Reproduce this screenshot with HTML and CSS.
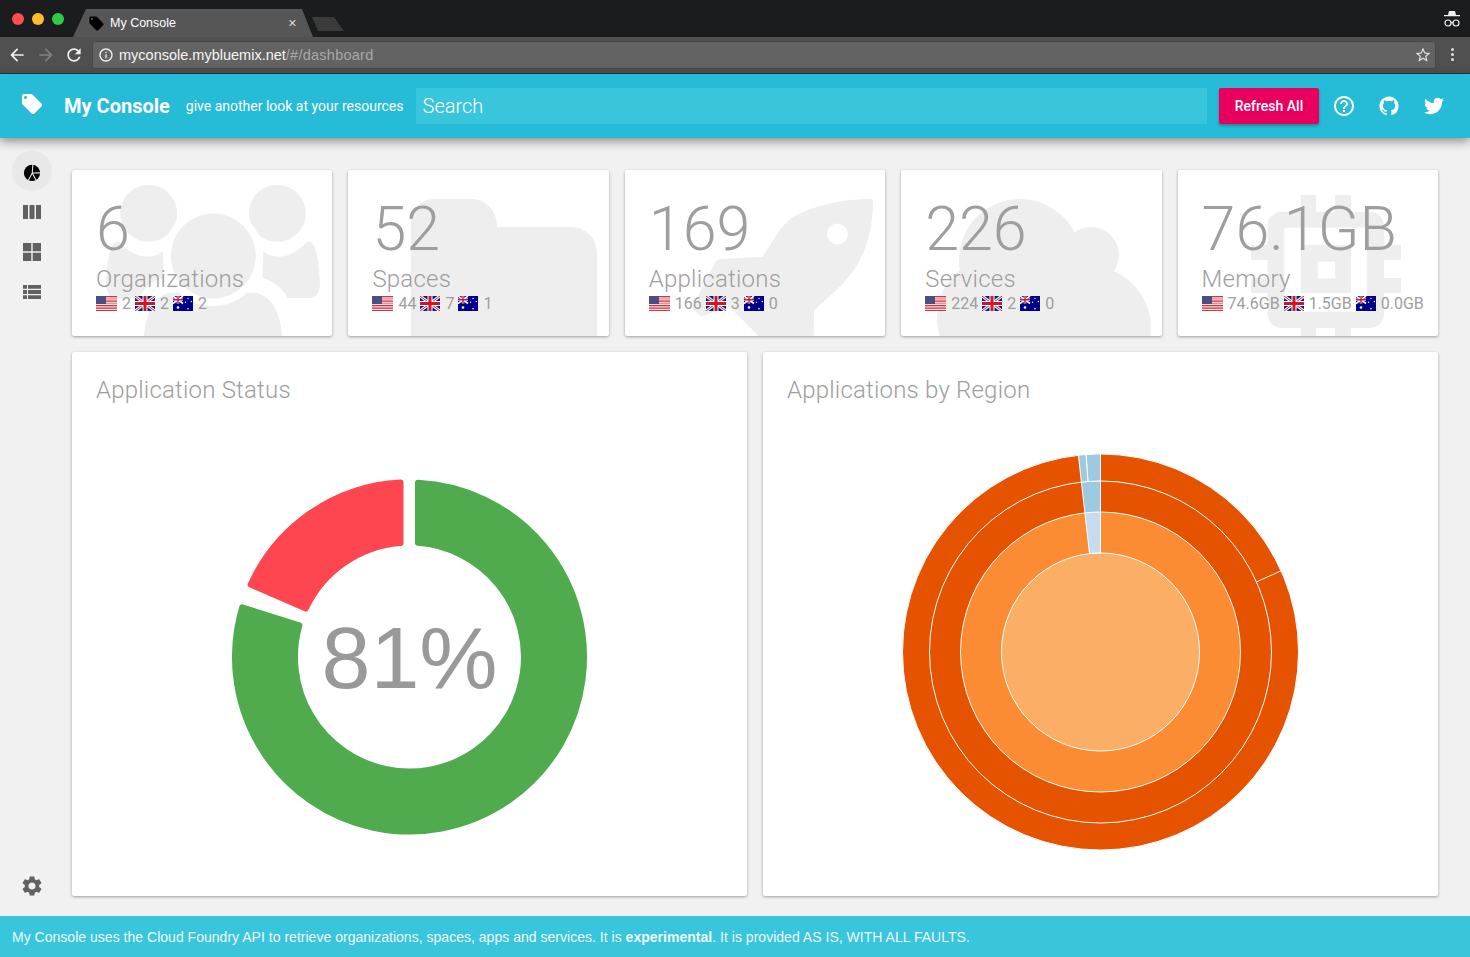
FILE: index.html
```html
<!DOCTYPE html>
<html lang="en">
<head>
  <meta charset="UTF-8">
  <meta name="viewport" content="width=device-width, initial-scale=1.0">
  <title>My Console</title>
  <link rel="stylesheet" href="styles.css">
</head>
<body>
  <svg class="defs" width="0" height="0">
    <symbol id="flag-us" viewBox="0 0 21 15">
      <rect width="21" height="15" fill="#f3dfe0"/>
      <path d="M0 0h21v1.2H0zM0 4.6h21v1.1H0zM0 9h21v1.2H0zM0 11.6h21v1.1H0zM0 13.9h21V15H0z" fill="#d0343f"/>
      <path d="M9 2.3h12v1.1H9zM9 6.8h12v1.1H9z" fill="#e28f95"/>
      <rect width="10" height="8" fill="#4a4f83"/>
    </symbol>
    <symbol id="flag-uk" viewBox="0 0 20 15">
      <rect width="20" height="15" fill="#00247d"/>
      <path d="M0 0l20 15M20 0L0 15" stroke="#fff" stroke-width="3"/>
      <path d="M0 0l20 15M20 0L0 15" stroke="#cf142b" stroke-width="1"/>
      <path d="M10 0v15M0 7.5h20" stroke="#fff" stroke-width="5"/>
      <path d="M10 0v15M0 7.5h20" stroke="#cf142b" stroke-width="3"/>
    </symbol>
    <symbol id="flag-au" viewBox="0 0 20 15">
      <rect width="20" height="15" fill="#00008b"/>
      <path d="M0 0l10 7.5M10 0L0 7.5" stroke="#fff" stroke-width="1.6"/>
      <path d="M5 0v7.5M0 3.75h10" stroke="#fff" stroke-width="2.6"/>
      <path d="M5 0v7.5M0 3.75h10" stroke="#cf142b" stroke-width="1.4"/>
      <g fill="#fff">
        <circle cx="5" cy="11.5" r="1.3"/>
        <circle cx="15" cy="2.5" r=".7"/>
        <circle cx="18.3" cy="5.5" r=".7"/>
        <circle cx="12.5" cy="6.3" r=".7"/>
        <circle cx="15" cy="12.8" r=".8"/>
      </g>
    </symbol>
    <symbol id="tag" viewBox="0 0 24 24">
      <path d="M21.41 11.58l-9-9C12.05 2.22 11.55 2 11 2H4c-1.1 0-2 .9-2 2v7c0 .55.22 1.05.59 1.42l9 9c.36.36.86.58 1.41.58.55 0 1.05-.22 1.41-.59l7-7c.37-.36.59-.86.59-1.41 0-.55-.23-1.06-.59-1.42zM5.5 7C4.67 7 4 6.33 4 5.5S4.67 4 5.5 4 7 4.67 7 5.5 6.33 7 5.5 7z"/>
    </symbol>
  </svg>

  <div class="browser">
    <div class="tabbar">
      <div class="lights">
        <span class="light red"></span>
        <span class="light yellow"></span>
        <span class="light green"></span>
      </div>
      <div class="tab">
        <svg class="tab-icon" viewBox="0 0 24 24"><use href="#tag"/></svg>
        <span class="tab-title">My Console</span>
        <span class="tab-close">&#10005;</span>
      </div>
      <div class="tab-new"></div>
      <svg class="incognito" viewBox="0 0 18 18">
        <path d="M6 1h6l1 4h4v1.3H1V5h4z" fill="#f0f0f0"/>
        <g fill="none" stroke="#f0f0f0" stroke-width="1.2">
          <circle cx="5" cy="13" r="3"/>
          <circle cx="13" cy="13" r="3"/>
          <path d="M8 12.6h2"/>
        </g>
      </svg>
    </div>
    <div class="toolbar">
      <svg class="nav-btn" viewBox="0 0 24 24"><path d="M20 11H7.83l5.59-5.59L12 4l-8 8 8 8 1.41-1.41L7.83 13H20v-2z"/></svg>
      <svg class="nav-btn off" viewBox="0 0 24 24"><path d="M12 4l-1.41 1.41L16.17 11H4v2h12.17l-5.58 5.59L12 20l8-8z"/></svg>
      <svg class="nav-btn" viewBox="0 0 24 24"><path d="M17.65 6.35C16.2 4.9 14.21 4 12 4c-4.42 0-7.99 3.58-7.99 8s3.57 8 7.99 8c3.73 0 6.84-2.55 7.73-6h-2.08c-.82 2.33-3.04 4-5.65 4-3.31 0-6-2.69-6-6s2.69-6 6-6c1.66 0 3.14.69 4.22 1.78L13 11h7V4l-2.35 2.35z"/></svg>
      <div class="address">
        <svg class="info" viewBox="0 0 24 24"><path d="M11 7h2v2h-2zm0 4h2v6h-2zm1-9C6.48 2 2 6.48 2 12s4.48 10 10 10 10-4.48 10-10S17.52 2 12 2zm0 18c-4.41 0-8-3.59-8-8s3.59-8 8-8 8 3.59 8 8-3.59 8-8 8z"/></svg>
        <span class="url">myconsole.mybluemix.net<span class="url-path">/#/dashboard</span></span>
        <svg class="star" viewBox="0 0 24 24"><path d="M22 9.24l-7.19-.62L12 2 9.19 8.63 2 9.24l5.46 4.73L5.82 21 12 17.27 18.18 21l-1.63-7.03L22 9.24zM12 15.4l-3.76 2.27 1-4.28-3.32-2.88 4.38-.38L12 6.1l1.71 4.04 4.38.38-3.32 2.88 1 4.28L12 15.4z"/></svg>
      </div>
      <div class="kebab"><span></span><span></span><span></span></div>
    </div>
  </div>

  <header class="app-header">
    <div class="logo"><svg viewBox="0 0 24 24"><use href="#tag"/></svg></div>
    <div class="app-title">My Console</div>
    <div class="tagline">give another look at your resources</div>
    <div class="search">Search</div>
    <button class="refresh">Refresh All</button>
    <svg class="head-icon" viewBox="0 0 24 24"><path d="M11 18h2v-2h-2v2zm1-16C6.48 2 2 6.48 2 12s4.48 10 10 10 10-4.48 10-10S17.52 2 12 2zm0 18c-4.41 0-8-3.59-8-8s3.59-8 8-8 8 3.59 8 8-3.59 8-8 8zm0-14c-2.21 0-4 1.79-4 4h2c0-1.1.9-2 2-2s2 .9 2 2c0 2-3 1.75-3 5h2c0-2.25 3-2.5 3-5 0-2.21-1.79-4-4-4z"/></svg>
    <svg class="head-icon" viewBox="-2 -2 20 20"><path d="M8 0C3.58 0 0 3.58 0 8c0 3.54 2.29 6.53 5.47 7.59.4.07.55-.17.55-.38 0-.19-.01-.82-.01-1.49-2.01.37-2.53-.49-2.69-.94-.09-.23-.48-.94-.82-1.13-.28-.15-.68-.52-.01-.53.63-.01 1.08.58 1.23.82.72 1.21 1.87.87 2.33.66.07-.52.28-.87.51-1.07-1.78-.2-3.64-.89-3.64-3.95 0-.87.31-1.59.82-2.15-.08-.2-.36-1.02.08-2.12 0 0 .67-.21 2.2.82.64-.18 1.32-.27 2-.27.68 0 1.36.09 2 .27 1.53-1.04 2.2-.82 2.2-.82.44 1.1.16 1.92.08 2.12.51.56.82 1.27.82 2.15 0 3.07-1.87 3.75-3.65 3.95.29.25.54.73.54 1.48 0 1.07-.01 1.93-.01 2.2 0 .21.15.46.55.38A8.013 8.013 0 0016 8c0-4.42-3.58-8-8-8z"/></svg>
    <svg class="head-icon" viewBox="-2.4 -2.4 28.8 28.8"><path d="M23.953 4.57a10 10 0 01-2.825.775 4.958 4.958 0 002.163-2.723c-.951.555-2.005.959-3.127 1.184a4.92 4.92 0 00-8.384 4.482C7.69 8.095 4.067 6.13 1.64 3.162a4.822 4.822 0 00-.666 2.475c0 1.71.87 3.213 2.188 4.096a4.904 4.904 0 01-2.228-.616v.06a4.923 4.923 0 003.946 4.827 4.996 4.996 0 01-2.212.085 4.936 4.936 0 004.604 3.417 9.867 9.867 0 01-6.102 2.105c-.39 0-.779-.023-1.17-.067a13.995 13.995 0 007.557 2.209c9.053 0 13.998-7.496 13.998-13.985 0-.21 0-.42-.015-.63A9.935 9.935 0 0024 4.59z"/></svg>
  </header>

  <div class="content">
    <nav class="sidebar">
      <div class="side-item active">
        <svg viewBox="0 0 20 20">
          <circle cx="10" cy="11" r="9"/>
          <path d="M10.3 11.2L11 1M10.3 11.2L20 11M10.3 11.2L5.5 20M10.3 11.2L15 20" stroke="#e8e8e8" stroke-width="1.2" fill="none"/>
        </svg>
      </div>
      <div class="side-item">
        <svg viewBox="0 0 18 14"><path d="M0 0h5v14H0zM6.5 0h5v14h-5zM13 0h5v14h-5z"/></svg>
      </div>
      <div class="side-item">
        <svg viewBox="0 0 18 18"><path d="M0 0h8.3v8.3H0zM9.7 0H18v8.3H9.7zM0 9.7h8.3V18H0zM9.7 9.7H18V18H9.7z"/></svg>
      </div>
      <div class="side-item">
        <svg viewBox="0 0 18 14"><path d="M0 0h4v3.8H0zM5 0h13v3.8H5zM0 5.1h4v3.8H0zM5 5.1h13v3.8H5zM0 10.2h4V14H0zM5 10.2h13V14H5z"/></svg>
      </div>
      <div class="side-item settings">
        <svg viewBox="2 2 20 20"><path d="M19.14 12.94c.04-.3.06-.61.06-.94 0-.32-.02-.64-.07-.94l2.03-1.58c.18-.14.23-.41.12-.61l-1.92-3.32c-.12-.22-.37-.29-.59-.22l-2.39.96c-.5-.38-1.03-.7-1.62-.94l-.36-2.54c-.04-.24-.24-.41-.48-.41h-3.84c-.24 0-.43.17-.47.41l-.36 2.54c-.59.24-1.13.57-1.62.94l-2.39-.96c-.22-.08-.47 0-.59.22L2.74 8.87c-.12.21-.08.47.12.61l2.03 1.58c-.05.3-.09.63-.09.94s.02.64.07.94l-2.03 1.58c-.18.14-.23.41-.12.61l1.92 3.32c.12.22.37.29.59.22l2.39-.96c.5.38 1.03.7 1.62.94l.36 2.54c.05.24.24.41.48.41h3.84c.24 0 .44-.17.47-.41l.36-2.54c.59-.24 1.13-.56 1.62-.94l2.39.96c.22.08.47 0 .59-.22l1.92-3.32c.12-.22.07-.47-.12-.61l-2.01-1.58zM12 15.6c-1.98 0-3.6-1.62-3.6-3.6s1.62-3.6 3.6-3.6 3.6 1.62 3.6 3.6-1.62 3.6-3.6 3.6z"/></svg>
      </div>
    </nav>

    <main class="dashboard">
      <section class="stats">
        <div class="card stat">
          <svg class="stat-bg" viewBox="0 0 260 166">
            <circle cx="76.7" cy="43.3" r="28.5"/>
            <circle cx="205.3" cy="43.3" r="28.5"/>
            <path d="M191 81C205 92 222 86 235 72C242 70 246 80 248 113C248 122 244 128 238 128H190z"/>
            <path d="M91 81C77 92 60 86 47 72C40 70 36 80 34 113C34 122 38 128 44 128H92z"/>
            <path class="halo" d="M64 190V170C64 140 78 116 98 115H185C205 118 218 140 218 170V190z"/>
            <circle class="cut" cx="141.3" cy="86" r="50"/>
            <circle cx="141.3" cy="86" r="42.5"/>
          </svg>
          <div class="stat-value">6</div>
          <div class="stat-label">Organizations</div>
          <div class="regions">
            <svg class="flag us"><use href="#flag-us"/></svg><span class="region-val">2</span>
            <svg class="flag"><use href="#flag-uk"/></svg><span class="region-val">2</span>
            <svg class="flag"><use href="#flag-au"/></svg><span class="region-val">2</span>
          </div>
        </div>

        <div class="card stat">
          <svg class="stat-bg" viewBox="0 0 260 166">
            <path d="M63 170V53C63 39 73 29 87 29H123C138 29 149 40 149 57H223C238 57 249 69 249 83V170z"/>
          </svg>
          <div class="stat-value">52</div>
          <div class="stat-label">Spaces</div>
          <div class="regions">
            <svg class="flag us"><use href="#flag-us"/></svg><span class="region-val">44</span>
            <svg class="flag"><use href="#flag-uk"/></svg><span class="region-val">7</span>
            <svg class="flag"><use href="#flag-au"/></svg><span class="region-val">1</span>
          </div>
        </div>

        <div class="card stat">
          <svg class="stat-bg" viewBox="0 0 260 166">
            <path d="M248 31C248 29 247 29 245 29C225 29 197 32 167.5 47C155 56 146 75 137.7 86.7L97 89C93 89 91 91 90 93L66.8 138.3L76.3 146.7L104.3 136.7L137.7 170H188.5L189.2 140C204 127 214 118 223.6 106.7C238 90 248 65 248 31z"/>
            <circle class="cut" cx="212.4" cy="64" r="10.5"/>
          </svg>
          <div class="stat-value">169</div>
          <div class="stat-label">Applications</div>
          <div class="regions">
            <svg class="flag us"><use href="#flag-us"/></svg><span class="region-val">166</span>
            <svg class="flag"><use href="#flag-uk"/></svg><span class="region-val">3</span>
            <svg class="flag"><use href="#flag-au"/></svg><span class="region-val">0</span>
          </div>
        </div>

        <div class="card stat">
          <svg class="stat-bg" viewBox="0 0 260 166">
            <circle cx="119" cy="90" r="61"/>
            <circle cx="190" cy="85" r="28"/>
            <circle cx="188" cy="158" r="62"/>
            <circle cx="98" cy="148" r="62"/>
            <rect x="90" y="90" width="100" height="76"/>
          </svg>
          <div class="stat-value">226</div>
          <div class="stat-label">Services</div>
          <div class="regions">
            <svg class="flag us"><use href="#flag-us"/></svg><span class="region-val">224</span>
            <svg class="flag"><use href="#flag-uk"/></svg><span class="region-val">2</span>
            <svg class="flag"><use href="#flag-au"/></svg><span class="region-val">0</span>
          </div>
        </div>

        <div class="card stat">
          <svg class="stat-bg" viewBox="0 0 260 166">
            <path d="M122.8 25H138V41.7H157V25H173V41.7H192C200 41.7 206 48 206 56V75H223V90H206V108H223V123H206V144C206 152 200 158 192 158H173V170H157V158H138V170H122.8V158H104C96 158 89.5 152 89.5 144V123H73V108H89.5V90H73V75H89.5V56C89.5 48 96 41.7 104 41.7H122.8z"/>
            <rect class="cut" x="106.3" y="57.7" width="82.5" height="84"/>
            <rect x="122.8" y="75" width="50.2" height="48"/>
            <rect class="cut" x="139.7" y="91.7" width="17.5" height="16.6"/>
          </svg>
          <div class="stat-value">76.1GB</div>
          <div class="stat-label">Memory</div>
          <div class="regions">
            <svg class="flag us"><use href="#flag-us"/></svg><span class="region-val">74.6GB</span>
            <svg class="flag"><use href="#flag-uk"/></svg><span class="region-val">1.5GB</span>
            <svg class="flag"><use href="#flag-au"/></svg><span class="region-val">0.0GB</span>
          </div>
        </div>
      </section>

      <section class="charts">
        <div class="card chart-card">
          <h2 class="chart-title">Application Status</h2>
          <div class="chart-body">
            <svg class="donut" viewBox="-177.5 -178 356 356">
              <path class="donut-ok" d="M8.5 -174.3A174.5 174.5 0 1 1 -167.3 -49.6L-110.1 -31.6A114.5 114.5 0 1 0 8.5 -114.2Z"/>
              <path class="donut-bad" d="M-9 -174.5A174.5 174.5 0 0 0 -158.8 -72.4L-103.8 -48.4A114.5 114.5 0 0 1 -9 -114.1Z"/>
              <text class="donut-label" x="0" y="31">81%</text>
            </svg>
          </div>
        </div>

        <div class="card chart-card">
          <h2 class="chart-title">Applications by Region</h2>
          <div class="chart-body sun-body">
            <svg class="sunburst" viewBox="-198.5 -199 398 398">
              <circle class="ring r4" r="198"/>
              <circle class="ring r3" r="171"/>
              <circle class="ring r2" r="140"/>
              <circle class="ring r1" r="99"/>
              <path class="slice b4" d="M0 -99L0 -140A140 140 0 0 0 -15.6 -139.1L-11 -98.4A99 99 0 0 1 0 -99Z"/>
              <path class="slice b3" d="M0 -140L0 -171A171 171 0 0 0 -19.1 -169.9L-15.6 -139.1A140 140 0 0 1 0 -140Z"/>
              <path class="slice b3" d="M0 -171L0 -198A198 198 0 0 0 -14.5 -197.5L-12.5 -170.5A171 171 0 0 1 0 -171Z"/>
              <path class="slice b3" d="M-12.5 -170.5L-14.5 -197.5A198 198 0 0 0 -22.1 -196.8L-19.1 -169.9A171 171 0 0 1 -12.5 -170.5Z"/>
              <path class="split" d="M156 -70.1L180.6 -81.2"/>
            </svg>
          </div>
        </div>
      </section>
    </main>
  </div>

  <footer class="notice">My Console uses the Cloud Foundry API to retrieve organizations, spaces, apps and services. It is <strong>experimental</strong>. It is provided AS IS, WITH ALL FAULTS.</footer>
</body>
</html>
```

FILE: styles.css
```css
:root {
  --cyan: #26bbd6;
  --cyan-light: #39c5db;
  --grey-text: #9e9e9e;
  --ghost: #eeeeee;
}

* {
  box-sizing: border-box;
}

html, body {
  height: 100%;
}

body {
  margin: 0;
  display: flex;
  flex-direction: column;
  overflow: hidden;
  background-color: #f1f1f1;
  font-family: Roboto, sans-serif;
}

.defs {
  display: block;
  height: 0;
}

/* browser chrome */
.browser {
  height: 74px;
  flex: none;
  font-family: "Liberation Sans", sans-serif;
}

.tabbar {
  height: 37px;
  display: flex;
  align-items: flex-end;
  background-color: #1b1c1e;
}

.lights {
  width: 73px;
  height: 100%;
  display: flex;
  align-items: center;
  gap: 8px;
  padding: 0 0 0 12px;
}

.light {
  width: 12px;
  height: 12px;
  border-radius: 50%;
}

.light.red { background-color: #fc4c4e; }
.light.yellow { background-color: #fdbc2e; }
.light.green { background-color: #2ecb47; }

.tab {
  width: 240px;
  height: 28px;
  display: flex;
  align-items: center;
  padding: 0 16px 0 15px;
  background-color: #565656;
  clip-path: polygon(0 100%, 13px 0, 229px 0, 100% 100%);
  color: #fff;
  font-size: 12.5px;
}

.tab-icon {
  width: 17px;
  height: 17px;
  margin-right: 5px;
  fill: #000;
  flex: none;
}

.tab-title {
  flex: 1;
}

.tab-close {
  color: #d8d8d8;
  font-size: 11px;
  font-family: "DejaVu Sans", sans-serif;
}

.tab-new {
  width: 32px;
  height: 14px;
  margin: 0 0 6px -1px;
  background-color: #3b3b3b;
  clip-path: polygon(0 0, 22px 0, 100% 100%, 6px 100%);
}

.incognito {
  width: 18px;
  height: 18px;
  margin: 0 9px 9px auto;
}

.toolbar {
  height: 37px;
  display: flex;
  align-items: center;
  padding: 0 10px 1px 7px;
  background-color: #505050;
  border-bottom: 1px solid #333;
}

.nav-btn {
  width: 20px;
  height: 20px;
  margin-right: 8.5px;
  fill: #f0f0f0;
  flex: none;
}

.nav-btn.off {
  fill: #808080;
}

.address {
  flex: 1;
  height: 28px;
  display: flex;
  align-items: center;
  margin-left: -0.5px;
  padding: 0 3px 0 5px;
  background-color: #636363;
  border: 1px solid #484848;
  border-radius: 3px;
}

.info {
  width: 16px;
  height: 16px;
  fill: #f2f2f2;
  margin-right: 5px;
}

.url {
  flex: 1;
  color: #f5f5f5;
  font-size: 14.5px;
}

.url-path {
  color: #a8a8a8;
  letter-spacing: 0.25px;
}

.star {
  width: 18px;
  height: 18px;
  fill: #e0e0e0;
}

.kebab {
  width: 16px;
  margin-left: 8px;
  display: flex;
  flex-direction: column;
  align-items: center;
  gap: 2px;
}

.kebab span {
  width: 3px;
  height: 3px;
  border-radius: 50%;
  background-color: #e0e0e0;
}

/* app header */
.app-header {
  height: 64px;
  flex: none;
  display: flex;
  align-items: center;
  position: relative;
  z-index: 2;
  padding-right: 24px;
  background-color: var(--cyan);
  box-shadow: 0 3px 10px rgba(0, 0, 0, 0.45);
  color: #fff;
}

.logo {
  width: 64px;
  display: flex;
  justify-content: center;
  margin-bottom: 4px;
}

.logo svg {
  width: 24px;
  height: 24px;
  fill: #fff;
}

.app-title {
  font-size: 20px;
  font-weight: 700;
}

.tagline {
  margin-left: 16px;
  font-size: 14px;
  white-space: nowrap;
}

.search {
  flex: 1;
  height: 36px;
  margin-left: 12px;
  padding-left: 7px;
  background-color: var(--cyan-light);
  font-size: 20px;
  font-weight: 300;
  line-height: 36px;
}

.refresh {
  width: 100px;
  height: 36px;
  margin: 0 13px 0 12px;
  border: none;
  border-radius: 2px;
  background-color: #e9005f;
  box-shadow: 0 2px 3px rgba(0, 0, 0, 0.25);
  color: #fff;
  font-family: Roboto, sans-serif;
  font-size: 14px;
  font-weight: 500;
}

.head-icon {
  width: 24px;
  height: 24px;
  fill: #fff;
  flex: none;
}

.head-icon + .head-icon {
  margin-left: 21px;
}

/* page */
.content {
  flex: 1;
  display: flex;
  min-height: 0;
}

.sidebar {
  width: 64px;
  flex: none;
  display: flex;
  flex-direction: column;
  align-items: center;
  padding: 13px 0 10px;
}

.side-item {
  width: 40px;
  height: 40px;
  display: flex;
  align-items: center;
  justify-content: center;
  padding-top: 2px;
  border-radius: 50%;
  fill: #616161;
}

.side-item svg {
  width: 18px;
  height: 18px;
}

.side-item.active {
  background-color: #e8e8e8;
  fill: #000;
}

.settings {
  margin-top: auto;
  padding-top: 0;
}

.settings svg {
  width: 20px;
  height: 20px;
}

.dashboard {
  flex: 1;
  display: flex;
  flex-direction: column;
  gap: 16px;
  min-width: 0;
  padding: 32px 32px 20px 8px;
}

.card {
  background-color: #fff;
  border-radius: 2px;
  box-shadow: 0 1px 3px rgba(0, 0, 0, 0.35);
}

.stats {
  height: 166px;
  flex: none;
  display: grid;
  grid-template-columns: repeat(5, 1fr);
  gap: 16px;
}

.stat {
  position: relative;
  overflow: hidden;
  padding: 24px 0 0 24px;
  color: var(--grey-text);
}

.stat-bg {
  position: absolute;
  top: 0;
  left: 0;
  width: 260px;
  height: 166px;
  fill: var(--ghost);
  overflow: visible;
}

.stat-bg .cut {
  fill: #fff;
}

.stat-bg .halo {
  stroke: #fff;
  stroke-width: 16px;
}

.stat-value,
.stat-label,
.regions {
  position: relative;
}

.stat-value {
  font-size: 61px;
  font-weight: 300;
  line-height: 70px;
}

.stat-label {
  margin-top: 1px;
  font-size: 24px;
  font-weight: 300;
  letter-spacing: 0.22px;
  line-height: 28px;
}

.regions {
  display: flex;
  align-items: center;
  height: 16px;
  margin-top: 2px;
  font-size: 16px;
  font-weight: 400;
  white-space: nowrap;
}

.flag {
  width: 20px;
  height: 15px;
  flex: none;
}

.flag.us {
  width: 21px;
}

.region-val {
  margin: 0 4px 0 5px;
}

.charts {
  flex: 1;
  display: grid;
  grid-template-columns: 1fr 1fr;
  gap: 16px;
  min-height: 0;
}

.chart-card {
  display: flex;
  flex-direction: column;
  padding: 24px 24px 0;
}

.chart-title {
  margin: 0 0 13px;
  color: var(--grey-text);
  font-size: 24px;
  font-weight: 300;
  letter-spacing: 0.2px;
  line-height: 28px;
}

.chart-body {
  flex: 1;
  display: flex;
  align-items: center;
  justify-content: center;
  min-height: 0;
}

.sun-body {
  padding-bottom: 10px;
}

.donut {
  width: 356px;
  height: 356px;
}

.donut-ok,
.donut-bad {
  stroke-width: 6px;
  stroke-linejoin: round;
}

.donut-ok {
  fill: #4fab4e;
  stroke: #4fab4e;
}

.donut-bad {
  fill: #fe4650;
  stroke: #fe4650;
}

.donut-label {
  fill: #999;
  font-family: "Liberation Sans", sans-serif;
  font-size: 88px;
  text-anchor: middle;
}

.sunburst {
  width: 398px;
  height: 398px;
}

.ring,
.slice {
  stroke: #fff;
  stroke-width: 1px;
}

.r4, .r3 { fill: #e55200; }
.r2 { fill: #fc8c34; }
.r1 { fill: #fbae66; }
.b3 { fill: #9ecae1; }
.b4 { fill: #c6dbef; }

.split {
  stroke: #fff;
  stroke-width: 1px;
}

.notice {
  height: 41px;
  flex: none;
  padding: 13px 12px 0;
  background-color: var(--cyan-light);
  color: #eef9fb;
  font-family: "Liberation Sans", sans-serif;
  font-size: 14px;
  letter-spacing: 0.02px;
}
```
